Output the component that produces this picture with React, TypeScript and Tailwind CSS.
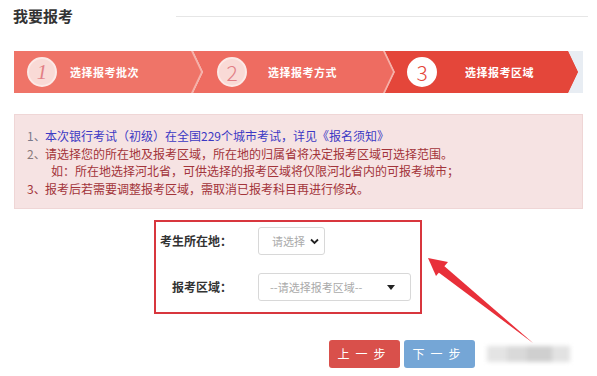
import React from 'react';

const FONT = { fontFamily: '"Noto Sans CJK SC", "Noto Sans", sans-serif' };

const steps = [
  { n: '1', label: '选择报考批次', w: 'w-[189px]', pl: 'pl-[13px]', gap: 'ml-[13px]', first: true, active: false, bg: 'bg-[#ef7468]' },
  { n: '2', label: '选择报考方式', w: 'w-[202px]', pl: 'pl-[24px]', gap: 'ml-[21px]', first: false, active: false, bg: 'bg-[#ee6c61]' },
  { n: '3', label: '选择报考区域', w: 'w-[193px]', pl: 'pl-[22px]', gap: 'ml-[28px]', first: false, active: true, bg: 'bg-[#e4463a]' },
];

const StepBar = () => (
  <div className="mx-[14px] mt-[26px] flex h-[42px] bg-[#e8edf3]">
    {steps.map((s, i) => {
      const outer = s.first
        ? 'polygon(0 0, calc(100% - 10px) 0, 100% 50%, calc(100% - 10px) 100%, 0 100%)'
        : 'polygon(0 0, calc(100% - 10px) 0, 100% 50%, calc(100% - 10px) 100%, 0 100%, 10px 50%)';
      const inner = s.first
        ? 'polygon(0 0, calc(100% - 12px) 0, calc(100% - 2px) 50%, calc(100% - 12px) 100%, 0 100%)'
        : 'polygon(0 0, calc(100% - 12px) 0, calc(100% - 2px) 50%, calc(100% - 12px) 100%, 0 100%, 10px 50%)';
      return (
        <div
          key={s.n}
          className={`${s.w} h-full shrink-0 ${s.active ? s.bg : 'bg-[#f6b0a8]'} ${i > 0 ? '-ml-[10px]' : ''}`}
          style={{ clipPath: outer }}
        >
          <div
            className={`flex h-full w-full items-center ${s.pl} ${s.bg}`}
            style={{ clipPath: s.active ? outer : inner }}
          >
            <div
              className={`flex h-[30px] w-[30px] items-center justify-center rounded-full border-2 ${
                s.active ? 'border-white bg-white text-[#e4463a]' : 'border-[#fce9e6] bg-[#f9dad6] text-[#e27f86]'
              } text-[21px] font-light leading-none ${s.first ? 'italic' : ''}`}
              style={s.first ? { fontFamily: '"Liberation Serif", serif' } : undefined}
            >
              {s.n}
            </div>
            <span className={`${s.gap} text-[11px] font-bold tracking-[0.5px] text-white`}>{s.label}</span>
          </div>
        </div>
      );
    })}
  </div>
);

const Notice = () => (
  <div className="mx-[14px] mt-[21px] h-[95px] border border-[#efd6d6] bg-[#f6e3e3] pl-[12px] pt-[12px] text-[12px] leading-[17.6px] text-[#a3343a]">
    <div className="flex">
      <span className="w-[18px] text-[#7a7a8a]">1、</span>
      <span className="text-[#3c39c4]">本次银行考试（初级）在全国229个城市考试，详见《报名须知》</span>
    </div>
    <div className="flex">
      <span className="w-[18px] text-[#8a7a7a]">2、</span>
      <span>请选择您的所在地及报考区域，所在地的归属省将决定报考区域可选择范围。</span>
    </div>
    <div className="flex pl-[24px]">
      <span>如：所在地选择河北省，可供选择的报考区域将仅限河北省内的可报考城市；</span>
    </div>
    <div className="flex">
      <span className="w-[18px]">3、</span>
      <span>报考后若需要调整报考区域，需取消已报考科目再进行修改。</span>
    </div>
  </div>
);

const RegionForm = () => (
  <div className="ml-[154px] mt-[11px] h-[94px] w-[268px] border-2 border-[#d8363e] text-[12px]">
    <div className="mt-[5px] flex items-center">
      <span className="ml-[4px] w-[98px] font-bold text-[#333]">考生所在地：</span>
      <div className="flex h-[28px] w-[67px] items-center rounded-[3px] border border-[#d8d8d8] bg-white pl-[13px] text-[#aaa]">
        <span className="text-[11px]">请选择</span>
        <svg width="9" height="7" viewBox="0 0 9 7" className="ml-[5px]">
          <path d="M1 1.5 L4.5 5 L8 1.5" stroke="#222" strokeWidth="1.8" fill="none" />
        </svg>
      </div>
    </div>
    <div className="mt-[18px] flex items-center">
      <span className="ml-[16px] w-[86px] font-bold text-[#333]">报考区域：</span>
      <div className="flex h-[28px] w-[153px] items-center rounded-[3px] border border-[#d8d8d8] bg-white pl-[11px] pr-[15px] text-[#aaa]">
        <span className="text-[11px]">--请选择报考区域--</span>
        <svg width="8" height="5" viewBox="0 0 8 5" className="ml-auto">
          <path d="M0 0 L8 0 L4 5 Z" fill="#222" />
        </svg>
      </div>
    </div>
  </div>
);

const Buttons = () => (
  <div className="ml-[329px] mt-[26px] flex items-center">
    <div className="flex h-[28px] w-[71px] items-center justify-center rounded-[3px] bg-[#d9504b] text-[12px] tracking-[6px] text-white">
      上一步
    </div>
    <div className="ml-[4px] flex h-[28px] w-[71px] items-center justify-center rounded-[3px] bg-[#75a6d6] text-[12px] tracking-[6px] text-white">
      下一步
    </div>
    <div className="ml-[12px] flex h-[16px] w-[83px] blur-[2px]">
      <div className="w-[20px] bg-[#e4e4e4]" />
      <div className="w-[20px] bg-[#d9d9d9]" />
      <div className="w-[25px] bg-[#cfcfcf]" />
      <div className="w-[18px] bg-[#e2e2e2]" />
    </div>
  </div>
);

export default function App() {
  return (
    <div className="relative h-[376px] w-[597px] overflow-hidden bg-white" style={FONT}>
      <div className="flex items-center pt-[7px]">
        <h1 className="ml-[13px] text-[15px] font-bold leading-[18px] text-[#333]">我要报考</h1>
        <div className="ml-[103px] mt-[1px] h-px w-[412px] bg-[#e6e6e6]" />
      </div>
      <StepBar />
      <Notice />
      <RegionForm />
      <Buttons />
      <svg className="pointer-events-none absolute left-0 top-0" width="597" height="376">
        <path d="M533 343 L441 268 L438 272 Z" fill="#e8303a" />
        <path d="M533 343 L443 265 L439 270 Z" fill="#e8303a" />
        <path d="M428 258 L448 262 L436 276 Z" fill="#e8303a" />
      </svg>
    </div>
  );
}
